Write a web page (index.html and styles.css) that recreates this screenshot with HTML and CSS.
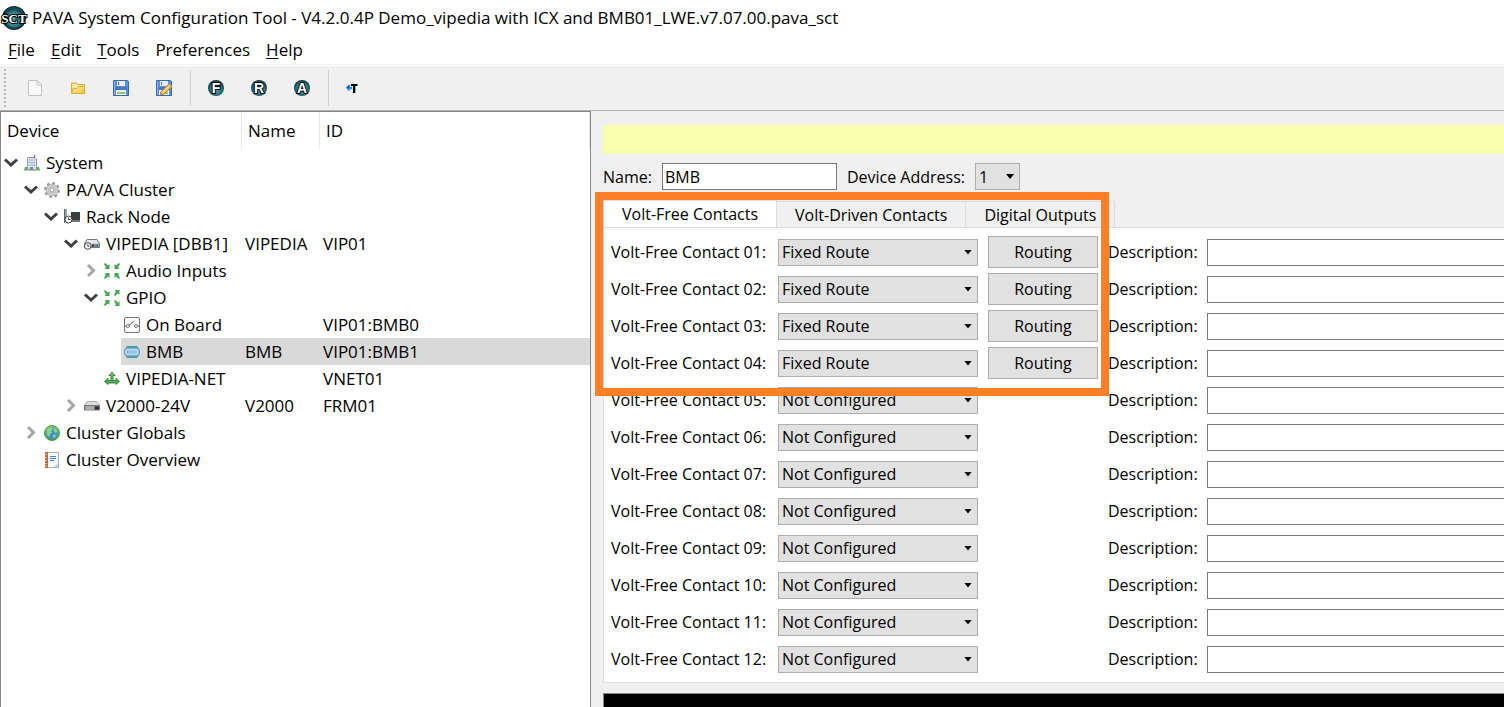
FILE: index.html
```html
<!DOCTYPE html>
<html lang="en">
<head>
    <meta charset="UTF-8">
    <meta name="viewport" content="width=device-width, initial-scale=1.0">
    <title>PAVA System Configuration Tool</title>
    <link rel="stylesheet" href="styles.css">
</head>
<body>

    <!-- shared icons -->
    <svg class="defs" width="0" height="0">
        <defs>
            <radialGradient id="teal" cx="50%" cy="55%" r="55%">
                <stop offset="0" stop-color="#4fa3ab"/>
                <stop offset="0.6" stop-color="#2b7f88"/>
                <stop offset="1" stop-color="#0b2f36"/>
            </radialGradient>
            <linearGradient id="greenFill" x1="0" y1="0" x2="0" y2="1">
                <stop offset="0" stop-color="#8fd07c"/>
                <stop offset="1" stop-color="#3c9a4a"/>
            </linearGradient>
            <linearGradient id="gold" x1="0" y1="0" x2="1" y2="1">
                <stop offset="0" stop-color="#fff3b8"/>
                <stop offset="1" stop-color="#f3c022"/>
            </linearGradient>
            <linearGradient id="metal" x1="0" y1="0" x2="0" y2="1">
                <stop offset="0" stop-color="#f2f2f2"/>
                <stop offset="1" stop-color="#8c8c8c"/>
            </linearGradient>
            <symbol id="open" viewBox="0 0 14 14">
                <path d="M1 3.500 L7 9 L13 3.500" fill="none" stroke="#404040" stroke-width="3"/>
            </symbol>
            <symbol id="closed" viewBox="0 0 14 14">
                <path d="M4 1 L9.500 6.500 L4 12" fill="none" stroke="#a6a6a6" stroke-width="3"/>
            </symbol>
            <symbol id="disk" viewBox="0 0 16 16">
                <path d="M0.5 0.5h14l1 1v14h-15z" fill="#5c8fdc" stroke="#3a69b4"/>
                <path d="M1.5 1.5v13" stroke="#8db4ee"/>
                <rect x="4" y="1" width="8" height="5" fill="#e9eff8"/>
                <rect x="5" y="2" width="1" height="3" fill="#3a69b4"/>
                <rect x="2" y="7" width="12" height="3" fill="#4577cc"/>
                <rect x="3" y="10" width="10" height="5" fill="#f4f8f0"/>
                <rect x="4" y="12" width="8" height="2" fill="#8fc47a"/>
            </symbol>
            <symbol id="inputs" viewBox="0 0 16 16">
                <g fill="#4aa455">
                    <path d="M0 1l1-1 3 2.500 1.500-1.500v5h-5l1.500-1.500z"/>
                    <path d="M16 1l-1-1-3 2.500-1.500-1.500v5h5l-1.500-1.500z"/>
                    <path d="M0 15l1 1 3-2.500 1.500 1.500v-5h-5l1.500 1.500z"/>
                    <path d="M16 15l-1 1-3-2.500-1.500 1.500v-5h5l-1.500 1.500z"/>
                </g>
            </symbol>
            <symbol id="gpio" viewBox="0 0 16 16">
                <g fill="#4aa455">
                    <path d="M0 1l1-1 3 2.500 1.500-1.500v5h-5l1.500-1.500z"/>
                    <path d="M10 5l1 1 3-2.500 1.500 1.500v-5h-5l1.500 1.500z"/>
                    <path d="M0 15l1 1 3-2.500 1.500 1.500v-5h-5l1.500 1.500z"/>
                    <path d="M10 11l1-1 3 2.500 1.500-1.500v5h-5l1.500-1.500z"/>
                </g>
            </symbol>
        </defs>
    </svg>

    <header class="title-bar">
        <svg class="app-icon" viewBox="0 0 24 24">
            <circle cx="12" cy="12" r="12" fill="#10262b"/>
            <circle cx="12" cy="12" r="10.500" fill="url(#teal)"/>
            <path d="M4 6a10 10 0 0 1 16 0M4 18a10 10 0 0 0 16 0" fill="none" stroke="#164950" stroke-width="2"/>
            <text class="app-letters" x="12" y="17" text-anchor="middle">SCT</text>
        </svg>
        <h1>PAVA System Configuration Tool - V4.2.0.4P Demo_vipedia with ICX and BMB01_LWE.v7.07.00.pava_sct</h1>
    </header>

    <nav class="menu-bar">
        <button type="button"><u>F</u>ile</button>
        <button type="button"><u>E</u>dit</button>
        <button type="button"><u>T</u>ools</button>
        <button type="button">Preferences</button>
        <button type="button"><u>H</u>elp</button>
    </nav>

    <div class="toolbar">
        <span class="grip"></span>
        <button type="button" aria-label="New">
            <svg viewBox="0 0 16 16"><path d="M1.5 0.5h8.500l4.500 4.500v10.500h-13z" fill="#f8f8f8" stroke="#c2c2c2"/><path d="M10 0.500v4.500h4.500z" fill="#fff" stroke="#c2c2c2"/></svg>
        </button>
        <button type="button" aria-label="Open">
            <svg viewBox="0 0 16 16"><path d="M1.5 13.500v-10.500h5l1 1.500h7v9z" fill="#fbe9a6" stroke="#dfa63e"/><path d="M2 13.500l1-5h4l1.500-2h6v7z" fill="url(#gold)" stroke="#e3aa35"/></svg>
        </button>
        <button type="button" aria-label="Save">
            <svg viewBox="0 0 16 16"><use href="#disk"/></svg>
        </button>
        <button type="button" aria-label="Save as">
            <svg viewBox="0 0 16 16"><use href="#disk"/><path d="M4.500 15l1-4 7-6.500 3 2.500-7.500 7z" fill="#f6c64c" stroke="#b97a1c"/><path d="M6.500 12.500l7-6.500" stroke="#fdeaa8"/><path d="M12 5l1.500-1 2.500 2-1 1.500z" fill="#e9a07a"/></svg>
        </button>
        <span class="separator"></span>
        <button type="button" aria-label="Fault">
            <svg viewBox="0 0 16 16"><circle cx="8" cy="8" r="8" fill="url(#teal)"/><text class="round-letter" x="8" y="13" text-anchor="middle">F</text></svg>
        </button>
        <button type="button" aria-label="Routing table">
            <svg viewBox="0 0 16 16"><circle cx="8" cy="8" r="8" fill="url(#teal)"/><text class="round-letter" x="8" y="13" text-anchor="middle">R</text></svg>
        </button>
        <button type="button" aria-label="Audio">
            <svg viewBox="0 0 16 16"><circle cx="8" cy="8" r="8" fill="url(#teal)"/><text class="round-letter" x="8" y="13" text-anchor="middle">A</text></svg>
        </button>
        <span class="separator"></span>
        <button type="button" aria-label="Text direction">
            <svg viewBox="0 0 16 16"><path d="M0 8l3.500-3.500v2.300h2.500v2.400h-2.500v2.300z" fill="#1a8cff"/><path d="M0 8l3.500-3.500v2.300l-1.500 1.200z" fill="#0a3fd8"/><path d="M5 4h6.500v2h-2.200v7h-2.300v-7h-2z" fill="#000"/></svg>
        </button>
    </div>

    <main>
        <section class="tree-panel">
            <table class="tree">
                <colgroup>
                    <col class="col-device">
                    <col class="col-name">
                    <col>
                </colgroup>
                <thead>
                    <tr><th>Device</th><th>Name</th><th>ID</th></tr>
                </thead>
                <tbody>
                    <tr>
                        <td><div class="node">
                            <svg class="toggle"><use href="#open"/></svg>
                            <span class="item">
                                <svg class="icon" viewBox="0 0 16 16"><path d="M1 12h14l1 3.500h-16z" fill="#63a45c"/><path d="M3.500 2.500h7l2 1v11h-9z" fill="#dbe6f3" stroke="#8c9cb0"/><path d="M5 5h6M5 7.500h6M5 10h6" stroke="#7c97bd" stroke-dasharray="1.500 0.800"/><rect x="6" y="12" width="3" height="3" fill="#7d8896"/><path d="M10.500 3v-3" stroke="#d94a3a"/></svg>
                                System
                            </span>
                        </div></td>
                        <td></td><td></td>
                    </tr>
                    <tr>
                        <td><div class="node level-1">
                            <svg class="toggle"><use href="#open"/></svg>
                            <span class="item">
                                <svg class="icon" viewBox="0 0 16 16"><circle cx="8" cy="8" r="6.800" fill="none" stroke="#999" stroke-width="2.400" stroke-dasharray="2.670 2.670"/><circle cx="8" cy="8" r="4.500" fill="none" stroke="#a8a8a8" stroke-width="3.500"/><circle cx="8" cy="8" r="4.500" fill="none" stroke="#d2d2d2" stroke-width="2"/><circle cx="8" cy="8" r="2" fill="#fff" stroke="#999"/></svg>
                                PA/VA Cluster
                            </span>
                        </div></td>
                        <td></td><td></td>
                    </tr>
                    <tr>
                        <td><div class="node level-2">
                            <svg class="toggle"><use href="#open"/></svg>
                            <span class="item">
                                <svg class="icon" viewBox="0 0 16 16"><rect x="0" y="0" width="3" height="13" fill="#8fa9ad"/><path d="M0.500 0v14" stroke="#4d6b70"/><path d="M7 3h9v8h-9z" fill="#3b3f42"/><path d="M5 12h11" stroke="#777" stroke-width="2"/><circle cx="4.500" cy="10.500" r="3.500" fill="#fff" stroke="#3c3c3c"/><path d="M4.500 8.500v2h2" fill="none" stroke="#3c3c3c"/></svg>
                                Rack Node
                            </span>
                        </div></td>
                        <td></td><td></td>
                    </tr>
                    <tr>
                        <td><div class="node level-3">
                            <svg class="toggle"><use href="#open"/></svg>
                            <span class="item">
                                <svg class="icon" viewBox="0 0 16 16"><path d="M3 3.500h10l2.500 4v4h-15v-4z" fill="url(#metal)" stroke="#777"/><path d="M4 4.500h8l2 3h-12z" fill="#e8e8e8"/><rect x="8" y="8.500" width="6" height="2" fill="#333"/><rect x="10" y="8.500" width="3" height="2" fill="#3fa6f2"/><circle cx="3.800" cy="10" r="3.300" fill="#fff" stroke="#444"/><path d="M3.800 8.200v2h1.800" fill="none" stroke="#444"/></svg>
                                VIPEDIA [DBB1]
                            </span>
                        </div></td>
                        <td>VIPEDIA</td><td>VIP01</td>
                    </tr>
                    <tr>
                        <td><div class="node level-4">
                            <svg class="toggle"><use href="#closed"/></svg>
                            <span class="item">
                                <svg class="icon"><use href="#inputs"/></svg>
                                Audio Inputs
                            </span>
                        </div></td>
                        <td></td><td></td>
                    </tr>
                    <tr>
                        <td><div class="node level-4">
                            <svg class="toggle"><use href="#open"/></svg>
                            <span class="item">
                                <svg class="icon"><use href="#gpio"/></svg>
                                GPIO
                            </span>
                        </div></td>
                        <td></td><td></td>
                    </tr>
                    <tr>
                        <td><div class="node level-5">
                            <span class="toggle"></span>
                            <span class="item">
                                <svg class="icon" viewBox="0 0 16 16"><rect x="0.500" y="0.500" width="15" height="15" rx="1.500" fill="#fbfbfb" stroke="#777"/><circle cx="3.800" cy="9" r="1.500" fill="none" stroke="#777"/><circle cx="12" cy="9" r="1.500" fill="none" stroke="#777"/><path d="M1 9h1.500M5 8l5.500-4M13.500 9h1.500" stroke="#777"/></svg>
                                On Board
                            </span>
                        </div></td>
                        <td></td><td>VIP01:BMB0</td>
                    </tr>
                    <tr class="selected">
                        <td><div class="node level-5">
                            <span class="toggle"></span>
                            <span class="item">
                                <svg class="icon" viewBox="0 0 16 16"><path d="M3 2h10l2 3h-14zM3 14h10l2-3h-14z" fill="#4d9a92"/><rect x="0.500" y="4" width="15" height="8" rx="3" fill="#a9d2ef" stroke="#5b9bc8"/><path d="M3 8h10" stroke="#4f8fbe" stroke-dasharray="1 1"/></svg>
                                BMB
                            </span>
                        </div></td>
                        <td>BMB</td><td>VIP01:BMB1</td>
                    </tr>
                    <tr>
                        <td><div class="node level-4">
                            <span class="toggle"></span>
                            <span class="item">
                                <svg class="icon" viewBox="0 0 16 16"><path d="M8 1l3 3.500h-2v5h3v-2l3.500 3-3.500 3v-1.500h-8v1.500l-3.500-3 3.500-3v2h3v-5h-2z" fill="url(#greenFill)" stroke="#37893f"/></svg>
                                VIPEDIA-NET
                            </span>
                        </div></td>
                        <td></td><td>VNET01</td>
                    </tr>
                    <tr>
                        <td><div class="node level-3">
                            <svg class="toggle"><use href="#closed"/></svg>
                            <span class="item">
                                <svg class="icon" viewBox="0 0 16 16"><path d="M3 3.500h10l2.500 4h-15z" fill="#dedede" stroke="#aaa"/><path d="M0.500 7.500h15v4.500h-15z" fill="#8a8a8a" stroke="#777"/><path d="M1.500 9h8M1.500 11h8" stroke="#d0d0d0"/><rect x="11" y="8.500" width="4" height="3" fill="#2b2b2b"/></svg>
                                V2000-24V
                            </span>
                        </div></td>
                        <td>V2000</td><td>FRM01</td>
                    </tr>
                    <tr>
                        <td><div class="node level-1">
                            <svg class="toggle"><use href="#closed"/></svg>
                            <span class="item">
                                <svg class="icon" viewBox="0 0 16 16"><circle cx="8" cy="8" r="7.500" fill="url(#greenFill)" stroke="#4b9a50"/><circle cx="8" cy="8" r="5.800" fill="#3f8fd2"/><path d="M3 5q2-3 5-2.500l1 2-2 1.500 1 2-2 1-1 3q-3-2-2-7zM10 3q3 1 3.500 4l-2 1-2-2zM9 10l3-0.500q0 2-2.500 4z" fill="#8fd486"/></svg>
                                Cluster Globals
                            </span>
                        </div></td>
                        <td></td><td></td>
                    </tr>
                    <tr>
                        <td><div class="node level-1">
                            <span class="toggle"></span>
                            <span class="item">
                                <svg class="icon" viewBox="0 0 16 16"><rect x="1.500" y="0.500" width="13" height="15" fill="#f4f7fb" stroke="#a8b0bb"/><rect x="1" y="0" width="3" height="16" fill="#c2663c"/><path d="M0.500 2.500h2M0.500 5.500h2M0.500 8.500h2M0.500 11.500h2M0.500 14h2" stroke="#e9d2c3"/><path d="M6 4.500h6M6 6.500h6M6 8.500h4" stroke="#4b83cf"/><path d="M14 11l-4 4h4z" fill="#ccd5e0"/></svg>
                                Cluster Overview
                            </span>
                        </div></td>
                        <td></td><td></td>
                    </tr>
                </tbody>
            </table>
        </section>

        <section class="detail-panel">
            <div class="status-strip"></div>

            <form class="device-form">
                <label for="deviceName">Name:</label>
                <input type="text" id="deviceName" value="BMB">
                <label for="deviceAddress">Device Address:</label>
                <span class="select address"><select id="deviceAddress"><option>1</option></select></span>
            </form>

            <div class="tab-area">
                <div class="tabs" role="tablist">
                    <button type="button" role="tab" class="active" aria-selected="true">Volt-Free Contacts</button>
                    <button type="button" role="tab">Volt-Driven Contacts</button>
                    <button type="button" role="tab">Digital Outputs</button>
                </div>

                <div class="contacts">
                    <div class="contact">
                        <label for="c1">Volt-Free Contact 01:</label>
                        <span class="select"><select id="c1"><option>Fixed Route</option></select></span>
                        <button type="button">Routing</button>
                        <label for="d1">Description:</label>
                        <input type="text" id="d1">
                    </div>
                    <div class="contact">
                        <label for="c2">Volt-Free Contact 02:</label>
                        <span class="select"><select id="c2"><option>Fixed Route</option></select></span>
                        <button type="button">Routing</button>
                        <label for="d2">Description:</label>
                        <input type="text" id="d2">
                    </div>
                    <div class="contact">
                        <label for="c3">Volt-Free Contact 03:</label>
                        <span class="select"><select id="c3"><option>Fixed Route</option></select></span>
                        <button type="button">Routing</button>
                        <label for="d3">Description:</label>
                        <input type="text" id="d3">
                    </div>
                    <div class="contact">
                        <label for="c4">Volt-Free Contact 04:</label>
                        <span class="select"><select id="c4"><option>Fixed Route</option></select></span>
                        <button type="button">Routing</button>
                        <label for="d4">Description:</label>
                        <input type="text" id="d4">
                    </div>
                    <div class="contact">
                        <label for="c5">Volt-Free Contact 05:</label>
                        <span class="select"><select id="c5"><option>Not Configured</option></select></span>
                        <span></span>
                        <label for="d5">Description:</label>
                        <input type="text" id="d5">
                    </div>
                    <div class="contact">
                        <label for="c6">Volt-Free Contact 06:</label>
                        <span class="select"><select id="c6"><option>Not Configured</option></select></span>
                        <span></span>
                        <label for="d6">Description:</label>
                        <input type="text" id="d6">
                    </div>
                    <div class="contact">
                        <label for="c7">Volt-Free Contact 07:</label>
                        <span class="select"><select id="c7"><option>Not Configured</option></select></span>
                        <span></span>
                        <label for="d7">Description:</label>
                        <input type="text" id="d7">
                    </div>
                    <div class="contact">
                        <label for="c8">Volt-Free Contact 08:</label>
                        <span class="select"><select id="c8"><option>Not Configured</option></select></span>
                        <span></span>
                        <label for="d8">Description:</label>
                        <input type="text" id="d8">
                    </div>
                    <div class="contact">
                        <label for="c9">Volt-Free Contact 09:</label>
                        <span class="select"><select id="c9"><option>Not Configured</option></select></span>
                        <span></span>
                        <label for="d9">Description:</label>
                        <input type="text" id="d9">
                    </div>
                    <div class="contact">
                        <label for="c10">Volt-Free Contact 10:</label>
                        <span class="select"><select id="c10"><option>Not Configured</option></select></span>
                        <span></span>
                        <label for="d10">Description:</label>
                        <input type="text" id="d10">
                    </div>
                    <div class="contact">
                        <label for="c11">Volt-Free Contact 11:</label>
                        <span class="select"><select id="c11"><option>Not Configured</option></select></span>
                        <span></span>
                        <label for="d11">Description:</label>
                        <input type="text" id="d11">
                    </div>
                    <div class="contact">
                        <label for="c12">Volt-Free Contact 12:</label>
                        <span class="select"><select id="c12"><option>Not Configured</option></select></span>
                        <span></span>
                        <label for="d12">Description:</label>
                        <input type="text" id="d12">
                    </div>
                </div>

                <div class="highlight"></div>
            </div>

            <div class="console"></div>
        </section>
    </main>

</body>
</html>
```
FILE: styles.css
```css
* {
    box-sizing: border-box;
}
body {
    margin: 0;
    height: 100vh;
    display: flex;
    flex-direction: column;
    overflow: hidden;
    background: #fff;
    color: #000;
    font-family: "Open Sans", "Noto Sans", sans-serif;
    font-size: 17px;
}
button, input, select {
    font: inherit;
    color: inherit;
    margin: 0;
    border-radius: 0;
}
.defs {
    position: absolute;
}

/* title and menu */
.title-bar {
    display: flex;
    align-items: center;
    gap: 6px;
    height: 35px;
    padding-left: 2px;
}
.app-icon {
    width: 24px;
    height: 24px;
    flex: none;
    overflow: visible;
}
.app-letters {
    font-family: "Liberation Serif", serif;
    font-size: 13px;
    font-weight: bold;
    fill: #fff;
    stroke: #000;
    stroke-width: 2px;
    paint-order: stroke;
}
h1 {
    margin: 0;
    font-size: 17px;
    font-weight: normal;
    white-space: nowrap;
}
.menu-bar {
    display: flex;
    height: 29px;
}
.menu-bar button {
    padding: 0 8px;
    border: 0;
    background: none;
}
u {
    text-underline-offset: 2px;
}

/* toolbar */
.toolbar {
    display: flex;
    align-items: center;
    height: 47px;
    padding-left: 4px;
    background: #f0f0f0;
    border-top: 1px solid #f0f0f0;
    border-bottom: 1px solid #b0b0b0;
    box-shadow: inset 0 1px #fff;
}
.toolbar button {
    display: flex;
    justify-content: center;
    width: 43px;
    padding: 0;
    border: 0;
    background: none;
}
.toolbar svg {
    width: 16px;
    height: 16px;
}
.grip {
    width: 2px;
    height: 38px;
    margin-right: 7px;
    background: repeating-linear-gradient(#b8b8b8 0 2px, transparent 2px 4px);
}
.separator {
    width: 1px;
    height: 36px;
    margin: 0 3px 0 5px;
    background: #d0d0d0;
}
.round-letter {
    font-family: "Liberation Sans", sans-serif;
    font-size: 14px;
    font-weight: bold;
    fill: #fff;
    stroke: #000;
    stroke-width: 2px;
    paint-order: stroke;
}

main {
    flex: 1;
    min-height: 0;
    display: flex;
}

/* device tree */
.tree-panel {
    flex: none;
    width: 591px;
    border: 1px solid #828790;
    border-bottom: 0;
}
.tree {
    width: 100%;
    table-layout: fixed;
    border-collapse: separate;
    border-spacing: 0;
}
.col-device {
    width: 241px;
}
.col-name {
    width: 78px;
}
.tree th {
    height: 37px;
    padding: 0 6px;
    border-right: 1px solid #e5e5e5;
    font-weight: normal;
    text-align: left;
}
.tree td {
    height: 27px;
    padding: 0 0 0 3px;
    line-height: 27px;
    white-space: nowrap;
}
.tree td:first-child {
    padding: 0;
}
.node {
    display: flex;
    align-items: center;
    padding-left: 3px;
}
.toggle {
    flex: none;
    width: 14px;
    height: 14px;
    margin-right: 3px;
}
.item {
    flex: 1;
    display: flex;
    align-items: center;
    gap: 6px;
    padding-left: 3px;
}
.icon {
    flex: none;
    width: 16px;
    height: 16px;
}
.level-1 { padding-left: 23px; }
.level-2 { padding-left: 43px; }
.level-3 { padding-left: 63px; }
.level-4 { padding-left: 83px; }
.level-5 { padding-left: 103px; }
.selected .item, .selected td + td {
    background: #d9d9d9;
}

/* device details */
.detail-panel {
    flex: 1;
    min-width: 0;
    display: flex;
    flex-direction: column;
    padding: 14px 0 0 12px;
    background: #f0f0f0;
    font-size: 16px;
}
.status-strip {
    height: 29px;
    background: #f7ffae;
}
.device-form {
    display: flex;
    align-items: center;
    gap: 10px;
    padding: 9px 0 10px;
}
input {
    width: 100%;
    height: 27px;
    padding: 0 2px;
    border: 1px solid #7a7a7a;
    background: #fff;
}
.device-form input {
    width: 175px;
}
.select {
    display: grid;
    align-items: center;
}
.select select, .select::after {
    grid-area: 1 / 1;
}
.select select {
    appearance: none;
    width: 100%;
    height: 27px;
    padding: 0 3px;
    border: 1px solid #adadad;
    background: #e1e1e1;
}
.select::after {
    content: "";
    justify-self: end;
    width: 8px;
    height: 5px;
    margin-right: 6px;
    background: #000;
    clip-path: polygon(0 0, 100% 0, 50% 100%);
    pointer-events: none;
}
.address {
    width: 45px;
}

.tab-area {
    position: relative;
}
.tabs {
    display: flex;
    align-items: flex-end;
}
.tabs button {
    height: 26px;
    padding: 0 18px;
    border: 1px solid #dcdcdc;
    border-left: 0;
    border-bottom: 0;
    background: #f0f0f0;
}
.tabs .active {
    height: 27px;
    border-left: 1px solid #dcdcdc;
    background: #fff;
}
.contacts {
    display: flex;
    flex-direction: column;
    gap: 5px;
    padding: 8px 0 7px 7px;
    border: 1px solid #dcdcdc;
    border-right: 0;
    background: #fff;
}
.contact {
    display: grid;
    grid-template-columns: 157px 200px 110px 89px 1fr;
    gap: 10px;
    align-items: center;
    height: 32px;
    white-space: nowrap;
}
.contact button {
    height: 32px;
    padding: 0;
    border: 1px solid #adadad;
    background: #e1e1e1;
}
.contact input {
    border-right: 0;
}

/* marks the routed contacts */
.highlight {
    position: absolute;
    top: -8px;
    left: -8px;
    width: 514px;
    height: 204px;
    border: 8px solid #ff7f27;
    pointer-events: none;
}
.console {
    flex: 1;
    margin-top: 10px;
    border-top: 1px solid #828790;
    border-left: 1px solid #828790;
    background: #000;
}
```
